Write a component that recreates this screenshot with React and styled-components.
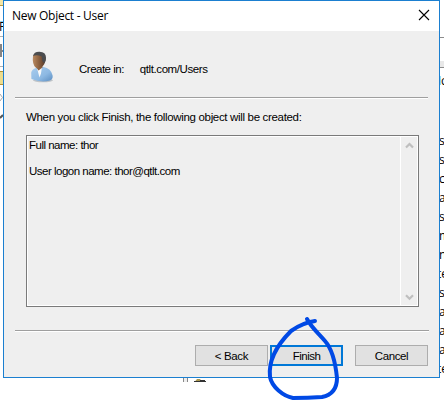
import React from "react";
import styled, { createGlobalStyle } from "styled-components";

const Global = createGlobalStyle`
  * { box-sizing: border-box; }
  body { margin: 0; background: #fff; overflow: hidden; }
`;

const Desktop = styled.div`
  position: relative;
  width: 444px;
  height: 402px;
  overflow: hidden;
  background: #fff;
  color: #000;
  font: 12px/13px "Open Sans", "Noto Sans", sans-serif;
`;

const Backdrop = styled.div`
  position: absolute;
  inset: 0;
  svg { display: block; }
`;

const BackdropList = styled.div`
  position: absolute;
  left: ${(p) => p.$x}px;
  top: ${(p) => p.$y}px;
  width: 4px;
  overflow: hidden;
  line-height: 19px;
`;

const ListItem = styled.div`
  height: 19px;
  margin-left: ${(p) => p.$shift ?? -1}px;
`;

const Dialog = styled.section`
  position: relative;
  margin-left: 3px;
  width: 437px;
  height: 378px;
  border: 1px solid #1b7fd0;
  background: #efefef;
  display: flex;
  flex-direction: column;
  font-family: "Liberation Sans", Arial, sans-serif;
  font-size: 11.5px;
`;

const TitleBar = styled.header`
  height: 30px;
  flex: none;
  background: #fff;
  display: flex;
  align-items: center;
  justify-content: space-between;
  padding: 0 9px 2px 8px;
  font-family: "Open Sans", "Noto Sans", sans-serif;
  font-size: 12px;
`;

const Label = styled.span`
  white-space: pre;
  letter-spacing: ${(p) => p.$track || 0}px;
`;

const Close = styled.button`
  border: 0;
  padding: 0;
  background: none;
  display: flex;
`;

const Identity = styled.div`
  height: 66px;
  flex: none;
  display: flex;
  align-items: center;
  padding: 10px 0 4px 24px;
`;

const Location = styled.div`
  display: flex;
  gap: ${(p) => p.$gap}px;
  margin-left: 25px;
  padding-top: 4px;
`;

const Rule = styled.hr`
  flex: none;
  margin: ${(p) => p.$top || 0}px ${(p) => p.$right}px 0 11px;
  height: 2px;
  border: 0;
  border-top: 1px solid #9f9f9f;
  border-bottom: 1px solid #fff;
`;

const Prompt = styled.div`
  height: 36px;
  flex: none;
  padding: 12px 0 0 22px;
`;

const Summary = styled.div`
  height: 172px;
  flex: none;
  margin: 0 20px 0 22px;
  border: 1px solid #7a7a7a;
  outline: 1px solid #fff;
  outline-offset: -2px;
  display: flex;
  justify-content: space-between;
`;

const SummaryText = styled.div`
  padding: 3px 0 0 2px;
  display: flex;
  flex-direction: column;
  gap: 13px;
`;

const ScrollTrack = styled.div`
  width: 18px;
  margin-bottom: 1px;
  border-left: 1px solid #fff;
  padding: 6px 0 4px 4px;
  display: flex;
  flex-direction: column;
  justify-content: space-between;
`;

const Actions = styled.footer`
  display: flex;
  justify-content: flex-end;
  padding: 13px 11px 0 0;
`;

const Button = styled.button`
  width: 73px;
  height: 21px;
  margin: 0 0 0 ${(p) => p.$gap}px;
  padding: 1px 0 0;
  border: ${(p) => (p.$primary ? "2px solid #0078d7" : "1px solid #adadad")};
  background: #e1e1e1;
  color: #000;
  font: inherit;
  display: flex;
  align-items: center;
  justify-content: center;
`;

const Marker = styled.svg`
  position: absolute;
  left: 0;
  top: 0;
  pointer-events: none;
`;

const Chevron = ({ down }) => (
  <svg width="9" height="7" viewBox="0 0 9 7">
    <path d={down ? "M1 1.3 4.5 4.8 8 1.3" : "M1 5.5 4.5 2 8 5.5"} fill="none" stroke="#bfbfbf" strokeWidth="2.2" />
  </svg>
);

const UserIcon = () => (
  <svg width="26" height="32" viewBox="0 0 26 32">
    <defs>
      <linearGradient id="coat" x1="0" y1="0" x2="1" y2="1">
        <stop offset="0" stopColor="#a9cdee" /><stop offset=".6" stopColor="#8db9e3" /><stop offset="1" stopColor="#5a8cc0" />
      </linearGradient>
      <linearGradient id="skin" x1="0" y1="0" x2="1" y2="0">
        <stop offset="0" stopColor="#b98960" /><stop offset=".5" stopColor="#8b603f" /><stop offset="1" stopColor="#54382a" />
      </linearGradient>
    </defs>
    <ellipse cx="15" cy="29.3" rx="10" ry="2" fill="#bfc3c7" />
    <path d="M3.4 28 3.2 21.5Q4 18.2 8 17L15 15.7Q23.4 17.5 24.6 24.5 25.2 28 22 29.5 13 32 3.4 28Z" fill="url(#coat)" />
    <path d="m9 17 5-1.500-1 7-1.500 4Z" fill="#f8f9fa" />
    <path d="M8 12h6.500v4.500L10.500 19.500 8 16Z" fill="#8a6143" />
    <path d="M5 5Q7 1 13 2q5 1 4.500 7-.6 5-4 7-3 2-5.800.6Q4 13 5 5Z" fill="url(#skin)" />
    <path d="M5 5Q6 .5 11.500.7 18 .9 18 6.800q0 4-2 5.200L14.300 10 13.800 5.500Q9 3.500 5 5Z" fill="#4b4c4e" />
  </svg>
);

const rightItems = ["s", "s", "c", "a", "s", "m", "n", "te", "st", "a", "a", "a", "te"];

export default function App() {
  return (
    <Desktop>
      <Global />
      <Backdrop>
        <svg width="444" height="402">
          <path d="M0 0h3v5H0Z" fill="#f5e6a6" /><path d="M0 5.500h3" stroke="#b89b3e" />
          <path d="M0 21.500h3" stroke="#8fd3f5" />
          <path d="M0 36.500h3M0 66.500h3" stroke="#b0b0b0" />
          <path d="M0 51h3M1 44v13" stroke="#858585" strokeWidth="2" />
          <path d="M0 72h3v12H0Z" fill="#eddc8c" /><path d="M0 71.500h3M0 84.500h3" stroke="#b09137" />
          <path d="m0 94 2.500 3.500L0 101" fill="none" stroke="#a9a9a9" />
          <path d="m0 118 3-3" stroke="#555" strokeWidth="2" />
          <path d="M440 37.500h4M440 67.500h4" stroke="#8c8c8c" />
          <path d="M440 61h4v6h-4Z" fill="#e8e8e8" />
          <path d="M183.500 378v4M187.500 378v4" stroke="#888" /><path d="M184 378h3v4h-3Z" fill="#eee" />
          <path d="M195 381.500l2-2.500h3l2 2.500Z" fill="#a7954d" /><path d="M194 381.500h12M200 380.500h5" stroke="#333" />
          <path d="M440.500 76v9" stroke="#8fdcf7" />
        </svg>
        <BackdropList $x={0} $y={17}><ListItem>F</ListItem></BackdropList>
        <BackdropList $x={440} $y={71}><ListItem $shift={1}>c</ListItem></BackdropList>
        <BackdropList $x={440} $y={131}>
          {rightItems.map((t, i) => <ListItem key={i} $shift={t === "te" ? -3 : -1}>{t}</ListItem>)}
        </BackdropList>
      </Backdrop>
      <Dialog>
        <TitleBar>
          <Label $track={-0.28}>New Object - User</Label>
          <Close aria-label="Close">
            <svg width="12" height="12" viewBox="0 0 12 12"><path d="m1 1 10 10M11 1 1 11" stroke="#000" strokeWidth="1.100" /></svg>
          </Close>
        </TitleBar>
        <Identity>
          <UserIcon />
          <Location $gap={16}>
            <Label $track={-0.5}>Create in:</Label>
            <Label $track={-0.42}>qtlt.com/Users</Label>
          </Location>
        </Identity>
        <Rule $right={11} />
        <Prompt><Label $track={-0.33}>When you click Finish, the following object will be created:</Label></Prompt>
        <Summary>
          <SummaryText>
            <Label $track={-0.5}>Full name: thor</Label>
            <Label $track={-0.5}>User logon name: thor@qtlt.com</Label>
          </SummaryText>
          <ScrollTrack><Chevron /><Chevron down /></ScrollTrack>
        </Summary>
        <Rule $top={23} $right={10} />
        <Actions>
          <Button $gap={0}><Label $track={-0.35}>&lt; Back</Label></Button>
          <Button $gap={2} $primary><Label $track={-0.5}>Finish</Label></Button>
          <Button $gap={12}><Label $track={-0.4}>Cancel</Label></Button>
        </Actions>
      </Dialog>
      <Marker width="444" height="402">
        <path d="M307 319C311 327 319 334 325 341 333 350 336 368 337 378 337 389 332 395 322 397Q308 398 293 398C283 396 272 387 270 377 268 360 278 344 291 331 298 326 307 322 315 321" fill="none" stroke="#0049e5" strokeWidth="4" strokeLinecap="round" strokeLinejoin="round" />
      </Marker>
    </Desktop>
  );
}
